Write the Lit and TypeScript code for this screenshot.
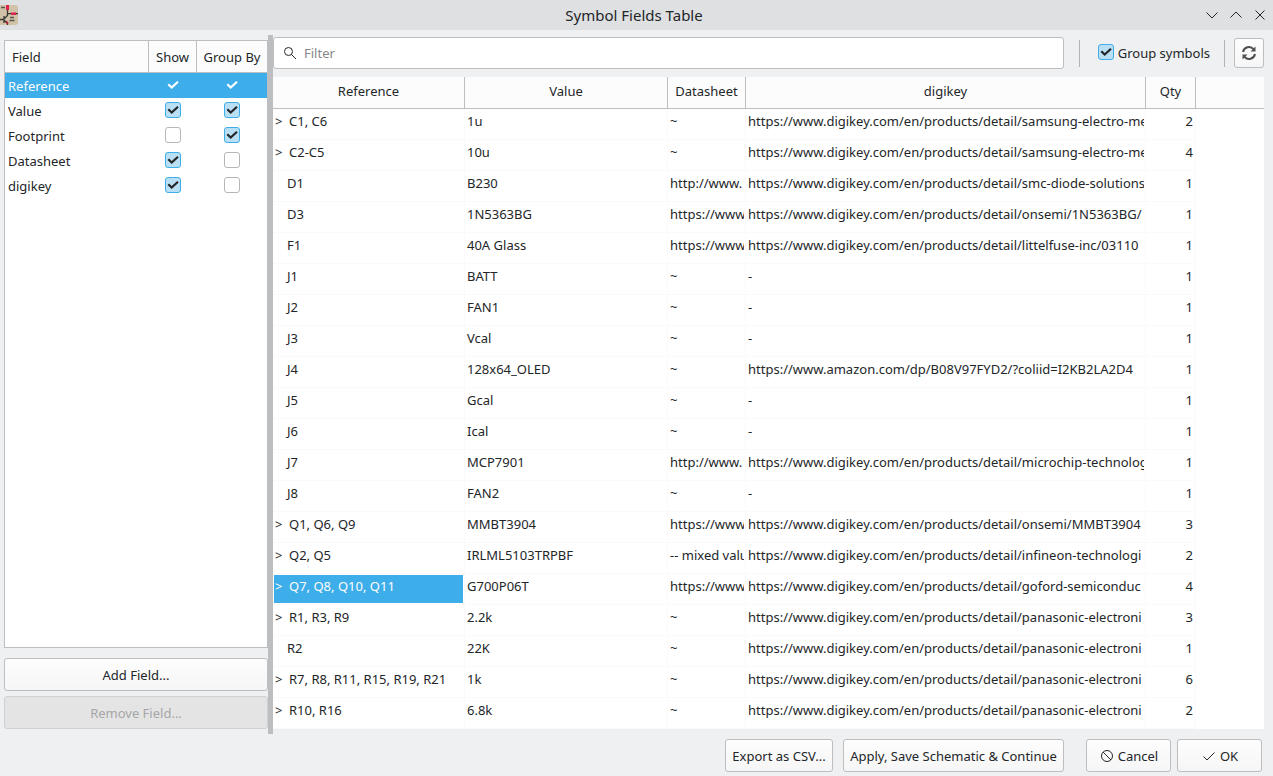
import { LitElement, html, css, svg } from "lit";
import { customElement, state } from "lit/decorators.js";
import { classMap } from "lit/directives/class-map.js";

interface Field {
  name: string;
  show: boolean;
  group: boolean;
}

interface Row {
  ref: string;
  value: string;
  sheet: string;
  link: string;
  qty: number;
  grouped?: boolean;
  selected?: boolean;
}

const DK = "https://www.digikey.com/en/products/detail/";

const ROWS: Row[] = [
  { ref: "C1, C6", value: "1u", sheet: "~", link: DK + "samsung-electro-me", qty: 2, grouped: true },
  { ref: "C2-C5", value: "10u", sheet: "~", link: DK + "samsung-electro-me", qty: 4, grouped: true },
  { ref: "D1", value: "B230", sheet: "http://www.", link: DK + "smc-diode-solutions", qty: 1 },
  { ref: "D3", value: "1N5363BG", sheet: "https://www", link: DK + "onsemi/1N5363BG/", qty: 1 },
  { ref: "F1", value: "40A Glass", sheet: "https://www", link: DK + "littelfuse-inc/03110", qty: 1 },
  { ref: "J1", value: "BATT", sheet: "~", link: "-", qty: 1 },
  { ref: "J2", value: "FAN1", sheet: "~", link: "-", qty: 1 },
  { ref: "J3", value: "Vcal", sheet: "~", link: "-", qty: 1 },
  { ref: "J4", value: "128x64_OLED", sheet: "~", link: "https://www.amazon.com/dp/B08V97FYD2/?coliid=I2KB2LA2D4", qty: 1 },
  { ref: "J5", value: "Gcal", sheet: "~", link: "-", qty: 1 },
  { ref: "J6", value: "Ical", sheet: "~", link: "-", qty: 1 },
  { ref: "J7", value: "MCP7901", sheet: "http://www.", link: DK + "microchip-technolog", qty: 1 },
  { ref: "J8", value: "FAN2", sheet: "~", link: "-", qty: 1 },
  { ref: "Q1, Q6, Q9", value: "MMBT3904", sheet: "https://www", link: DK + "onsemi/MMBT3904", qty: 3, grouped: true },
  { ref: "Q2, Q5", value: "IRLML5103TRPBF", sheet: "-- mixed valu", link: DK + "infineon-technologi", qty: 2, grouped: true },
  { ref: "Q7, Q8, Q10, Q11", value: "G700P06T", sheet: "https://www", link: DK + "goford-semiconduc", qty: 4, grouped: true, selected: true },
  { ref: "R1, R3, R9", value: "2.2k", sheet: "~", link: DK + "panasonic-electroni", qty: 3, grouped: true },
  { ref: "R2", value: "22K", sheet: "~", link: DK + "panasonic-electroni", qty: 1 },
  { ref: "R7, R8, R11, R15, R19, R21", value: "1k", sheet: "~", link: DK + "panasonic-electroni", qty: 6, grouped: true },
  { ref: "R10, R16", value: "6.8k", sheet: "~", link: DK + "panasonic-electroni", qty: 2, grouped: true },
];

const base = css`
  * {
    box-sizing: border-box;
  }
  button,
  input {
    font: inherit;
    color: inherit;
    margin: 0;
  }
  button {
    display: flex;
    align-items: center;
    justify-content: center;
    gap: 4px;
    height: 33px;
    padding: 0 6px;
    border: 1px solid #bcbebf;
    border-radius: 3px;
    background: linear-gradient(#fdfdfd, #f6f6f6);
    white-space: nowrap;
  }
  button:disabled {
    color: #a5a7a8;
    border-color: #cfd0d1;
    background: #e4e4e4;
  }
  .check {
    appearance: none;
    display: block;
    flex: none;
    width: 16px;
    height: 16px;
    border: 1px solid #b5b7b8;
    border-radius: 3px;
    background: #fff;
  }
  .check:checked {
    border-color: #3daee9;
    background: #b9dff4
      url("data:image/svg+xml,%3Csvg xmlns='http://www.w3.org/2000/svg' viewBox='0 0 14 14'%3E%3Cpath d='M2.3 6.2 5.7 9.600 12 3.800' fill='none' stroke='%23232629' stroke-width='2.200'/%3E%3C/svg%3E")
      center / 14px 14px;
  }
  .check.plain {
    border-color: transparent;
    background: url("data:image/svg+xml,%3Csvg xmlns='http://www.w3.org/2000/svg' viewBox='0 0 14 14'%3E%3Cpath d='M2.3 6.2 5.7 9.600 12 3.800' fill='none' stroke='%23ffffff' stroke-width='2.200'/%3E%3C/svg%3E")
      center / 14px 14px;
  }
  table {
    width: 100%;
    table-layout: fixed;
    border-collapse: separate;
    border-spacing: 0;
  }
  th {
    height: 32px;
    padding: 0;
    font-weight: 400;
    text-align: center;
    white-space: nowrap;
    background: #fcfcfc;
    border-bottom: 1px solid #bcbebf;
    border-right: 1px solid #bcbebf;
  }
  th:last-child {
    border-right: 0;
  }
`;

@customElement("field-list")
export class FieldList extends LitElement {
  @state() private fields: Field[] = [
    { name: "Reference", show: true, group: true },
    { name: "Value", show: true, group: true },
    { name: "Footprint", show: false, group: true },
    { name: "Datasheet", show: true, group: false },
    { name: "digikey", show: true, group: false },
  ];

  static styles = [
    base,
    css`
      :host {
        display: flex;
        flex-direction: column;
        gap: 5px;
      }
      .list {
        flex: 1;
        margin-bottom: 5px;
        background: #fff;
        border: 1px solid #bcbebf;
      }
      .show {
        width: 48px;
      }
      .group {
        width: 70px;
      }
      th:first-child {
        text-align: left;
        padding-left: 7px;
      }
      td {
        height: 25px;
        padding: 0 0 0 3px;
      }
      td.tick {
        padding: 0 0 1px;
      }
      td .check {
        margin: 0 auto;
      }
      .selected td {
        color: #fcfcfc;
        background: #3daee9;
      }
    `,
  ];

  render() {
    return html`
      <div class="list">
        <table>
          <colgroup>
            <col />
            <col class="show" />
            <col class="group" />
          </colgroup>
          <thead>
            <tr>
              <th>Field</th>
              <th>Show</th>
              <th>Group By</th>
            </tr>
          </thead>
          <tbody>
            ${this.fields.map(
              (f, i) => html`<tr class=${classMap({ selected: i === 0 })}>
                <td>${f.name}</td>
                <td class="tick">
                  <input
                    type="checkbox"
                    class=${classMap({ check: true, plain: i === 0 })}
                    aria-label="Show ${f.name}"
                    .checked=${f.show}
                  />
                </td>
                <td class="tick">
                  <input
                    type="checkbox"
                    class=${classMap({ check: true, plain: i === 0 })}
                    aria-label="Group By ${f.name}"
                    .checked=${f.group}
                  />
                </td>
              </tr>`
            )}
          </tbody>
        </table>
      </div>
      <button type="button">Add Field...</button>
      <button type="button" disabled>Remove Field...</button>
    `;
  }
}

@customElement("symbol-grid")
export class SymbolGrid extends LitElement {
  static styles = [
    base,
    css`
      :host {
        display: block;
        background: #fff;
      }
      .c-ref {
        width: 192px;
      }
      .c-value {
        width: 203px;
      }
      .c-sheet {
        width: 78px;
      }
      .c-link {
        width: 400px;
      }
      .c-qty {
        width: 50px;
      }
      th {
        padding-bottom: 4px;
      }
      td {
        height: 31px;
        padding: 1px;
        border-right: 1px solid #fafafa;
        border-bottom: 1px solid #fafafa;
      }
      td:last-child {
        border: 0;
      }
      .cell {
        height: 28px;
        padding-left: 1px;
        line-height: 22px;
        white-space: pre;
        overflow: hidden;
      }
      .single {
        padding-left: 13px;
      }
      .arrow {
        display: inline-block;
        width: 14px;
      }
      .num {
        padding-right: 1px;
        text-align: right;
      }
      .selected {
        color: #fcfcfc;
        background: #3daee9;
      }
    `,
  ];

  render() {
    return html`
      <table>
        <colgroup>
          <col class="c-ref" />
          <col class="c-value" />
          <col class="c-sheet" />
          <col class="c-link" />
          <col class="c-qty" />
          <col />
        </colgroup>
        <thead>
          <tr>
            <th>Reference</th>
            <th>Value</th>
            <th>Datasheet</th>
            <th>digikey</th>
            <th>Qty</th>
            <th></th>
          </tr>
        </thead>
        <tbody>
          ${ROWS.map(
            (r) => html`<tr>
              <td>
                <div class=${classMap({ cell: true, single: !r.grouped, selected: !!r.selected })}>${r.grouped
                    ? html`<span class="arrow">&gt;</span>`
                    : ""}${r.ref}</div>
              </td>
              <td><div class="cell">${r.value}</div></td>
              <td><div class="cell">${r.sheet}</div></td>
              <td><div class="cell">${r.link}</div></td>
              <td><div class="cell num">${r.qty}</div></td>
              <td></td>
            </tr>`
          )}
        </tbody>
      </table>
    `;
  }
}

const line = (d: string) => html`<svg
  width="16"
  height="16"
  viewBox="0 0 16 16"
  fill="none"
  stroke="#232629"
  aria-hidden="true"
>
  ${svg`<path d=${d} />`}
</svg>`;

@customElement("app-root")
export class AppRoot extends LitElement {
  static styles = [
    base,
    css`
      :host {
        display: flex;
        flex-direction: column;
        min-height: 100vh;
        font: 13px/18px "Noto Sans", sans-serif;
        color: #232629;
        background: #eff0f1;
      }
      svg {
        display: block;
        flex: none;
      }
      .titlebar {
        display: grid;
        grid-template-columns: 1fr auto 1fr;
        align-items: center;
        height: 30px;
        padding-right: 5px;
        background: #dee0e2;
      }
      .title {
        margin: 0;
        font-size: 15px;
        font-weight: 400;
      }
      .window {
        display: flex;
        justify-content: flex-end;
        gap: 8px;
      }
      .window button {
        width: 16px;
        height: 16px;
        padding: 0;
        border: 0;
        background: none;
      }
      .main {
        flex: 1;
        display: flex;
        padding: 5px 9px 0 4px;
      }
      .fields {
        width: 264px;
        padding: 5px 0;
      }
      .splitter {
        width: 5px;
        background: #bcbebf;
      }
      .content {
        flex: 1;
        min-width: 0;
        padding: 2px 0 5px;
      }
      .toolbar {
        display: flex;
        align-items: center;
        height: 32px;
        margin-bottom: 8px;
      }
      .filter {
        flex: 1;
        display: flex;
        align-items: center;
        gap: 6px;
        height: 32px;
        padding-left: 8px;
        border: 1px solid #bcbebf;
        border-radius: 3px;
        background: #fff;
      }
      .filter input {
        flex: 1;
        min-width: 0;
        padding: 0;
        border: 0;
        outline: 0;
        background: none;
      }
      .filter input::placeholder {
        color: #85878a;
        opacity: 1;
      }
      .sep {
        width: 1px;
        height: 27px;
        background: #b0b2b3;
      }
      .sep.first {
        margin: 0 18px 0 15px;
      }
      .sep.second {
        margin: 0 9px 0 14px;
      }
      .toggle {
        display: flex;
        align-items: flex-start;
        gap: 4px;
        line-height: 20px;
      }
      .toggle .check {
        margin-top: 1px;
      }
      .refresh {
        width: 30px;
        height: 30px;
        padding: 0;
      }
      .footer {
        display: flex;
        justify-content: flex-end;
        gap: 6px;
        padding: 5px 11px 4px;
      }
      .export {
        width: 108px;
        margin-right: 4px;
      }
      .apply {
        width: 221px;
        margin-right: 16px;
      }
      .answer {
        width: 85px;
        gap: 3px;
      }
    `,
  ];

  render() {
    return html`
      <header class="titlebar">
        <svg width="18" height="20" viewBox="0 0 18 20" aria-hidden="true">
          <path d="M0 0h15a3 3 0 0 1 3 3v14a3 3 0 0 1-3 3H0z" fill="#d0c2a6" />
          <path d="M1 2.500h4M10 12.500h4M9.500 15.500h5" stroke="#5a5550" stroke-width="1.500" />
          <path d="M0 14.500h3.500M4 11v7M4.500 13.500 7.500 10.500V5M4.500 15.500l3 3V20M7.500 8.700H18" stroke="#3a3835" stroke-width="1.300" fill="none" />
          <path d="M7.500 0v5" stroke="#e0224f" stroke-width="3" />
          <path d="M11 8.700h5" stroke="#e0224f" stroke-width="2.500" />
          <path d="m6 16.500 2 2" stroke="#b02040" stroke-width="2" />
        </svg>
        <h1 class="title">Symbol Fields Table</h1>
        <div class="window">
          <button type="button" aria-label="Minimize">${line("M2.500 5.500 8 11l5.500-5.500")}</button>
          <button type="button" aria-label="Maximize">${line("M2.500 10.500 8 5l5.500 5.500")}</button>
          <button type="button" aria-label="Close">${line("m3.500 3.500 9 9m0-9-9 9")}</button>
        </div>
      </header>
      <main class="main">
        <field-list class="fields"></field-list>
        <div class="splitter"></div>
        <section class="content">
          <div class="toolbar">
            <label class="filter">
              ${line("M6.500 2.500a4 4 0 1 0 0 8 4 4 0 0 0 0-8zM9.500 9.500l4.500 4.500")}
              <input type="text" placeholder="Filter" aria-label="Filter" />
            </label>
            <span class="sep first"></span>
            <label class="toggle"><input type="checkbox" class="check" checked />Group symbols</label>
            <span class="sep second"></span>
            <button type="button" class="refresh" aria-label="Refresh">
              <svg width="16" height="16" viewBox="0 0 16 16" fill="none" stroke="#4d4f51" stroke-width="2">
                <path d="M2 7a6 6 0 0 1 10.500-2.800M14 9a6 6 0 0 1-10.500 2.800" />
                <path d="M14.500 1.500V6.500H9.500zM1.500 14.500V9.500H6.500z" fill="#4d4f51" stroke="none" />
              </svg>
            </button>
          </div>
          <symbol-grid></symbol-grid>
        </section>
      </main>
      <footer class="footer">
        <button type="button" class="export">Export as CSV...</button>
        <button type="button" class="apply">Apply, Save Schematic &amp; Continue</button>
        <button type="button" class="answer">
          ${line("M8 2.500a5.500 5.500 0 1 0 0 11 5.500 5.500 0 0 0 0-11zM4 4l8 8")}Cancel
        </button>
        <button type="button" class="answer">${line("m2.500 8.500 3.500 3.500 7.500-7.500")}OK</button>
      </footer>
    `;
  }
}
